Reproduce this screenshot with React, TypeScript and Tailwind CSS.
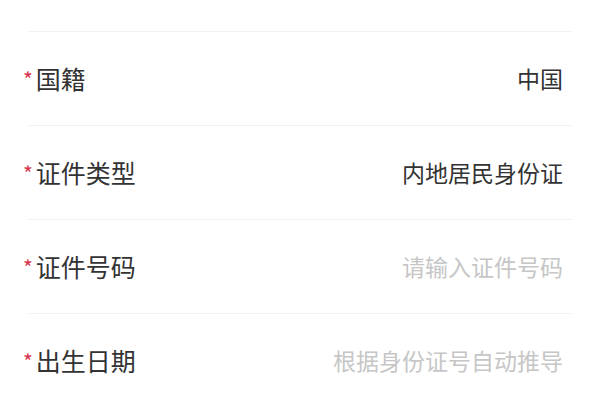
import React from "react";

const rows = [
  { label: "国籍", value: "中国", placeholder: false },
  { label: "证件类型", value: "内地居民身份证", placeholder: false },
  { label: "证件号码", value: "请输入证件号码", placeholder: true },
  { label: "出生日期", value: "根据身份证号自动推导", placeholder: true },
];

export default function App() {
  return (
    <div
      className="w-[600px] h-[400px] bg-white overflow-hidden"
      style={{ fontFamily: '"Noto Sans CJK SC", "Noto Sans", sans-serif' }}
    >
      <div className="h-[31px]" />
      {rows.map((r) => (
        <div key={r.label}>
          <div className="h-px bg-[#f1f1f1] mx-[28px]" />
          <div className="h-[93px] flex items-center justify-between pl-[23px] pr-[37px]">
            <div className="flex items-center">
              <span className="text-[21px] leading-none text-[#d6344f] mr-[3px] mt-[2px]">*</span>
              <span className="text-[25px] leading-none text-[#333333]">{r.label}</span>
            </div>
            <span
              className={
                "text-[23px] leading-none " +
                (r.placeholder ? "text-[#c6c6c6]" : "text-[#333333]")
              }
            >
              {r.value}
            </span>
          </div>
        </div>
      ))}
    </div>
  );
}
